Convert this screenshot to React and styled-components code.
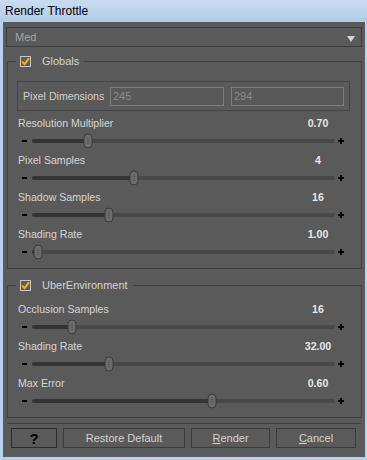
import React from 'react';
import styled, { createGlobalStyle } from 'styled-components';

const Global = createGlobalStyle`
  html, body { margin: 0; padding: 0; background: #b9d1ea; }
  body { font-family: "Liberation Sans", Arial, sans-serif; }
  * { box-sizing: border-box; }
`;

const Window = styled.div`
  width: 367px;
  height: 460px;
  display: flex;
  flex-direction: column;
  background: #b9d1ea;
`;

const TitleBar = styled.div`
  height: 22px;
  flex: none;
  padding-left: 5px;
  display: flex;
  align-items: center;
  font-size: 12px;
  color: #000;
  background: linear-gradient(#c9dcf1, #b3cbe6);
`;

const Frame = styled.div`
  flex: 1;
  display: flex;
  padding: 0 2px 3px 3px;
`;

const Client = styled.div`
  flex: 1;
  display: flex;
  flex-direction: column;
  background: #5a5a5a;
  padding: 5px 3px 0 3px;
  font-size: 10.6px;
  color: #d4d4d4;
`;

const Dropdown = styled.div`
  height: 20px;
  border: 1px solid #3c3c3c;
  display: flex;
  align-items: center;
  justify-content: space-between;
  padding: 0 6px 0 8px;
  color: #a4a4a4;
  font-size: 11px;
`;

const Arrow = styled.svg`
  width: 8px;
  height: 6px;
  margin-top: 3px;
`;

const Group = styled.fieldset`
  margin: ${p => p.$top}px 0 0 1px;
  padding: 0;
  min-width: 0;
  border: 1px solid #404040;
`;

const Legend = styled.legend`
  display: flex;
  align-items: center;
  gap: 11px;
  height: 12px;
  margin-left: 8px;
  padding: 0 5px 0 4px;
  color: #d4d4d4;
  font-size: 11px;
`;

const Check = styled.span`
  width: 11px;
  height: 11px;
  border: 1px solid #c8c8c8;
  display: flex;
  align-items: center;
  justify-content: center;
`;

const GroupBody = styled.div`
  display: flex;
  flex-direction: column;
  gap: 5px;
  padding: ${p => p.$pt}px 11px ${p => p.$pb}px 9px;
`;

const DimBox = styled.div`
  height: 30px;
  border: 1px solid #444;
  display: flex;
  align-items: center;
  padding-left: 5px;
  gap: 7px;
`;

const DimLabel = styled.span`
  flex: none;
  width: 80px;
  white-space: nowrap;
  color: #d0d0d0;
`;

const Input = styled.div`
  flex: none;
  width: ${p => p.$w}px;
  height: 19px;
  border: 1px solid #7c7c7c;
  background: #595959;
  color: #8a8a8a;
  display: flex;
  align-items: center;
  padding-left: 2px;
  font-size: 11px;
`;

const Row = styled.div`
  display: flex;
  flex-direction: column;
  gap: 4px;
`;

const LabelRow = styled.div`
  height: 14px;
  display: flex;
  align-items: center;
  justify-content: space-between;
  padding: 0 12px 0 1px;
`;

const Label = styled.span`
  color: #d6d6d6;
`;

const Value = styled.span`
  width: 40px;
  text-align: center;
  font-weight: bold;
  color: #e6e6e6;
`;

const SliderRow = styled.div`
  height: 14px;
  display: flex;
  align-items: center;
`;

const Minus = styled.span`
  width: 15px;
  display: flex;
  justify-content: center;
  &::before {
    content: "";
    width: 5px;
    height: 2px;
    background: #000;
  }
`;

const Plus = styled.span`
  width: 15px;
  height: 6px;
  position: relative;
  &::before, &::after {
    content: "";
    position: absolute;
    background: #000;
  }
  &::before { left: 3px; top: 2px; width: 6px; height: 2px; }
  &::after { left: 5px; top: 0; width: 2px; height: 6px; }
`;

const Track = styled.div`
  flex: 1;
  height: 4px;
  border-radius: 2px;
  background: #484848;
  position: relative;
`;

const Fill = styled.div`
  height: 100%;
  border-radius: 2px;
  background: #343434;
`;

const Thumb = styled.div`
  position: absolute;
  top: 50%;
  width: 9px;
  height: 15px;
  border-radius: 5px;
  border: 1px solid #3a3a3a;
  background: #6c6c6c;
  transform: translate(-50%, -50%);
  &::after {
    content: "";
    position: absolute;
    left: 3px;
    top: 3px;
    width: 1px;
    height: 7px;
    background: repeating-linear-gradient(#3e3e3e 0 1px, transparent 1px 2px);
  }
`;

const Separator = styled.div`
  height: 1px;
  margin: 5px 1px 0 1px;
  background: #3c3c3c;
`;

const ButtonRow = styled.div`
  display: flex;
  gap: 6px;
  padding-left: 5px;
  margin-top: 4px;
`;

const Button = styled.div`
  width: ${p => p.$w}px;
  height: 20px;
  border: 1px solid ${p => (p.$dark ? '#2c2c2c' : '#3c3c3c')};
  display: flex;
  align-items: center;
  justify-content: center;
  color: #d2d2d2;
  font-size: 11px;
`;

const Help = styled.span`
  color: #000;
  font-weight: bold;
  font-size: 15px;
`;

const U = styled.span`
  text-decoration: underline;
`;

const globals = [
  { label: 'Resolution Multiplier', value: '0.70', pos: 0.185 },
  { label: 'Pixel Samples', value: '4', pos: 0.337 },
  { label: 'Shadow Samples', value: '16', pos: 0.254 },
  { label: 'Shading Rate', value: '1.00', pos: 0.02 },
];

const uber = [
  { label: 'Occlusion Samples', value: '16', pos: 0.132 },
  { label: 'Shading Rate', value: '32.00', pos: 0.254 },
  { label: 'Max Error', value: '0.60', pos: 0.594 },
];

function CheckBox() {
  return (
    <Check>
      <svg width="9" height="9" viewBox="0 0 9 9">
        <path d="M1.2 4.6 L3.6 7.2 L8 1.2" fill="none" stroke="#f3b800" strokeWidth="2" />
      </svg>
    </Check>
  );
}

function Slider({ label, value, pos }) {
  return (
    <Row>
      <LabelRow>
        <Label>{label}</Label>
        <Value>{value}</Value>
      </LabelRow>
      <SliderRow>
        <Minus />
        <Track>
          <Fill style={{ width: `${pos * 100}%` }} />
          <Thumb style={{ left: `${pos * 100}%` }} />
        </Track>
        <Plus />
      </SliderRow>
    </Row>
  );
}

export default function App() {
  return (
    <>
      <Global />
      <Window>
        <TitleBar>Render Throttle</TitleBar>
        <Frame>
          <Client>
            <Dropdown>
              <span>Med</span>
              <Arrow viewBox="0 0 8 6">
                <polygon points="0,0 8,0 4,6" fill="#d4d4d4" />
              </Arrow>
            </Dropdown>
            <Group $top={8}>
              <Legend>
                <CheckBox />
                <span>Globals</span>
              </Legend>
              <GroupBody $pt={14} $pb={9}>
                <DimBox>
                  <DimLabel>Pixel Dimensions</DimLabel>
                  <Input $w={114}>245</Input>
                  <Input $w={113}>294</Input>
                </DimBox>
                {globals.map((s, i) => (
                  <Slider key={i} {...s} />
                ))}
              </GroupBody>
            </Group>
            <Group $top={10}>
              <Legend>
                <CheckBox />
                <span>UberEnvironment</span>
              </Legend>
              <GroupBody $pt={11} $pb={9}>
                {uber.map((s, i) => (
                  <Slider key={i} {...s} />
                ))}
              </GroupBody>
            </Group>
            <Separator />
            <ButtonRow>
              <Button $w={46} $dark>
                <Help>?</Help>
              </Button>
              <Button $w={122}>Restore Default</Button>
              <Button $w={79}>
                <span><U>R</U>ender</span>
              </Button>
              <Button $w={80}>
                <span><U>C</U>ancel</span>
              </Button>
            </ButtonRow>
          </Client>
        </Frame>
      </Window>
    </>
  );
}
